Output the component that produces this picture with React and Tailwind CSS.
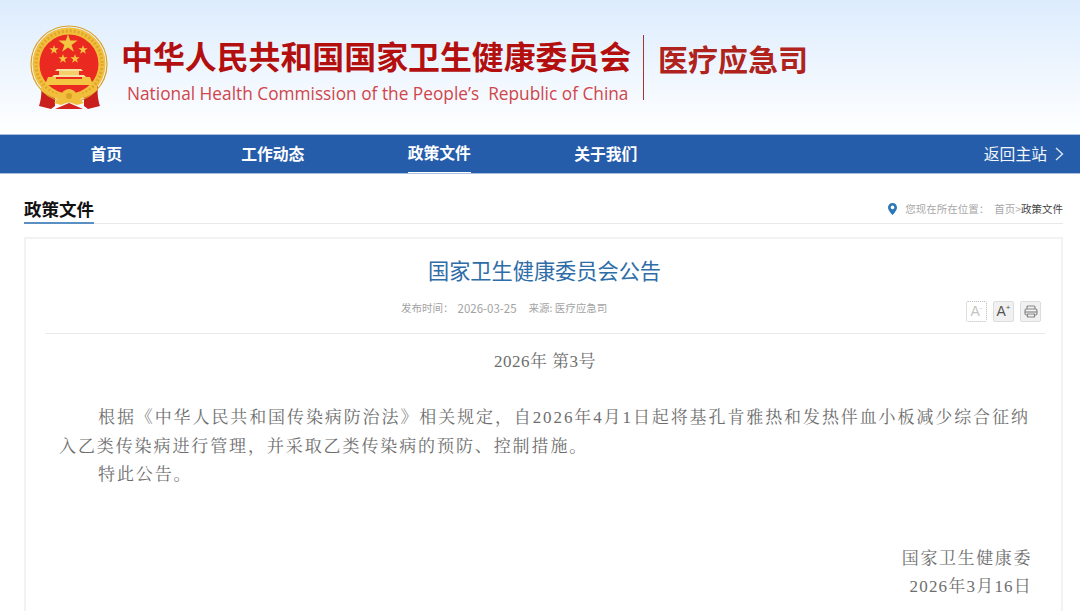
import React from 'react';

const cjk = '"Microsoft YaHei", "Noto Sans CJK SC", sans-serif';

function Emblem() {
  return (
    <svg width="84" height="86" viewBox="0 0 84 86" className="shrink-0">
      {/* ribbons behind the wreath */}
      <path d="M13 59c1 9 0 16-2 22l12 3 4-3 0-14z" fill="#c9201d" />
      <path d="M70 59c-1 9 0 16 2 22l-12 3-4-3 0-14z" fill="#c9201d" />
      <path d="M27 84l14-6 14 6z" fill="#d5241f" />
      {/* wreath */}
      <circle cx="41" cy="39" r="36.5" fill="#f1bf3c" />
      <circle cx="41" cy="39" r="38" fill="none" stroke="#dba127" strokeWidth="1.2" />
      <circle cx="41" cy="39" r="33" fill="none" stroke="#dfa52c" strokeWidth="3" strokeDasharray="2 2" />
      <circle cx="41" cy="39" r="29.5" fill="#ea2a20" />
      {/* stars */}
      <polygon points="40,9 42.2,15.6 49.5,15.6 43.6,19.9 45.9,26.7 40,22.5 34.1,26.7 36.4,19.9 30.5,15.6 37.8,15.6" fill="#f3c541" />
      <polygon points="26,20 27.1,23.3 30.6,23.3 27.8,25.4 28.9,28.8 26,26.7 23.1,28.8 24.2,25.4 21.4,23.3 24.9,23.3" fill="#f3c541" />
      <polygon points="55,20 56.1,23.3 59.6,23.3 56.8,25.4 57.9,28.8 55,26.7 52.1,28.8 53.2,25.4 50.4,23.3 53.9,23.3" fill="#f3c541" />
      <polygon points="35,29 36.1,32.3 39.6,32.3 36.8,34.4 37.9,37.8 35,35.7 32.1,37.8 33.2,34.4 30.4,32.3 33.9,32.3" fill="#f3c541" />
      <polygon points="47,29 48.1,32.3 51.6,32.3 48.8,34.4 49.9,37.8 47,35.7 44.1,37.8 45.2,34.4 42.4,32.3 45.9,32.3" fill="#f3c541" />
      {/* gate */}
      <path d="M29 44h24l2 2H27z" fill="#f8e2a2" />
      <rect x="31" y="46" width="20" height="4" fill="#f4cf6a" />
      <path d="M26 50h30l2 2H24z" fill="#f8e2a2" />
      <rect x="28" y="52" width="26" height="2" fill="#ea2a20" />
      <path d="M20 52h8v2h26v-2h8l3 8H17z" fill="#f3c541" />
      {/* knot and lower band */}
      <path d="M13 60c7 7 17 11 28 11s21-4 28-11l0 5c-7 7-17 10-28 10S20 72 13 65z" fill="#f1bf3c" />
      <path d="M34 68c2-3 5-4 7-4s5 1 7 4l7 1-4 4 5 5-7 2-8-3-8 3-7-2 5-5-4-4z" fill="#f1bf3c" />
      <circle cx="41" cy="71" r="3" fill="#dba127" />
    </svg>
  );
}

function Pin() {
  return (
    <svg width="9" height="12" viewBox="0 0 9 12">
      <path d="M4.5 0C2 0 0 2 0 4.4 0 7.5 4.5 12 4.5 12S9 7.5 9 4.4C9 2 7 0 4.5 0z" fill="#2a78b8" />
      <circle cx="4.5" cy="4.4" r="1.8" fill="#fff" />
    </svg>
  );
}

function PrintIcon() {
  return (
    <svg width="14" height="13" viewBox="0 0 14 13" fill="none" stroke="#888" strokeWidth="1.2">
      <path d="M3 4V2a1 1 0 0 1 1-1h6a1 1 0 0 1 1 1v2" />
      <rect x="1" y="4" width="12" height="6" rx="1.5" />
      <path d="M1 7h12" />
      <path d="M3.5 9h7v3h-7z" fill="#eee" />
    </svg>
  );
}

const navItems = [
  { label: '首页' },
  { label: '工作动态' },
  { label: '政策文件', active: true },
  { label: '关于我们' },
];

export default function App() {
  return (
    <div className="w-[1080px] h-[611px] overflow-hidden bg-white" style={{ fontFamily: cjk }}>
      <header className="h-[134px] bg-gradient-to-b from-[#dcecfd] to-[#ffffff] flex pl-[28px] pt-[25px]">
        <Emblem />
        <div className="ml-[9px] pt-[8px] w-[512px]">
          <div className="text-[31.9px] leading-[44px] font-bold text-[#b40f0f] whitespace-nowrap">中华人民共和国国家卫生健康委员会</div>
          <div className="mt-[4px] ml-[6px] text-[17.3px] leading-[26px] text-[#d0454b] whitespace-nowrap" style={{ fontFamily: '"Open Sans", sans-serif' }}>National Health Commission of the People’s&nbsp; Republic of China</div>
        </div>
        <div className="ml-[10px] mt-[10px] w-px h-[65px] bg-[#a8332f]" />
        <div className="ml-[14px] mt-[13px] text-[30px] leading-[40px] font-bold text-[#b0231c] whitespace-nowrap">医疗应急司</div>
      </header>

      <nav className="h-[40px] bg-[#265dab] border-y border-[#a9c0de] flex items-stretch pl-[23px] pr-[16px] text-white">
        {navItems.map((item) => (
          <div key={item.label} className="w-[166.5px] flex justify-center">
            <a className={`h-full flex items-center pb-[1px] text-[15.8px] font-bold ${item.active ? 'border-b border-white' : ''}`}>{item.label}</a>
          </div>
        ))}
        <div className="ml-auto flex items-center gap-[8px] pb-[1px] text-[15.8px] text-[#f2f6fb]">
          返回主站
          <svg width="9" height="14" viewBox="0 0 9 14" fill="none" stroke="#e4ecf6" strokeWidth="1.3"><path d="M1 1l6.5 6L1 13" /></svg>
        </div>
      </nav>

      <div className="pl-[24px] pr-[17px] pt-[23px]">
        <div className="h-[27px] border-b border-[#e8e8e8] flex items-start justify-between">
          <h2 className="h-[27px] border-b-2 border-[#5a8fc2] text-[17.5px] leading-[24px] font-bold text-[#111]">政策文件</h2>
          <div className="flex items-center h-[24px] text-[10.5px] text-[#a8a8a8]">
            <Pin />
            <span className="ml-[8px]">您现在所在位置：</span>
            <span className="ml-[5px]">首页&gt;</span>
            <span className="text-[#444]">政策文件</span>
          </div>
        </div>

        <main className="mt-[13px] border-2 border-[#f2f2f2] h-[400px] pl-[19px] pr-[16px]">
          <h1 className="pt-[15px] pr-[1px] text-center text-[21.2px] leading-[32px] text-[#2e6da8]">国家卫生健康委员会公告</h1>
          <div className="relative h-[48px] border-b border-[#e9e9e9]">
            <div className="pt-[14px] pl-[356px] flex text-[10.5px] leading-[16px] text-[#a3a3a3]">
              <span>发布时间：</span>
              <span className="ml-[4px] mr-[12px] text-[11.5px]">2026-03-25</span>
              <span>来源: 医疗应急司</span>
            </div>
            {/* font size and print tools */}
            <div className="absolute right-[4px] top-[15px] flex gap-[6px]">
              <div className="w-[21px] h-[21px] rounded-[2px] border border-dotted border-[#bdbdbd] flex items-center justify-center text-[14px] text-[#c4c4c4]" style={{ fontFamily: '"Liberation Sans", sans-serif' }}>A<sup className="text-[8px]">-</sup></div>
              <div className="w-[21px] h-[21px] rounded-[2px] border border-[#ddd] bg-[#f1f1f1] flex items-center justify-center text-[14px] text-[#555]" style={{ fontFamily: '"Liberation Sans", sans-serif' }}>A<sup className="text-[8px]">+</sup></div>
              <div className="w-[21px] h-[21px] rounded-[2px] border border-[#ddd] bg-[#f1f1f1] flex items-center justify-center"><PrintIcon /></div>
            </div>
          </div>

          <div className="text-[#6e6e6e] text-[17px] leading-[28.25px] tracking-[1.9px]" style={{ fontFamily: '"Liberation Serif", "Noto Serif CJK SC", "Noto Sans CJK SC", serif' }}>
            <p className="pt-[14px] text-center tracking-[0.5px]">2026年 第3号</p>
            <div className="mt-[28px] pl-[14px] pr-[10px]">
              <p className="indent-[39px]">根据《中华人民共和国传染病防治法》相关规定，自2026年4月1日起将基孔肯雅热和发热伴血小板减少综合征纳入乙类传染病进行管理，并采取乙类传染病的预防、控制措施。</p>
              <p className="indent-[39px]">特此公告。</p>
              <div className="mt-[56px] text-right pr-[3px]">
                <p className="tracking-[1.6px]">国家卫生健康委</p>
                <p className="tracking-[1.2px]">2026年3月16日</p>
              </div>
            </div>
          </div>
        </main>
      </div>
    </div>
  );
}
